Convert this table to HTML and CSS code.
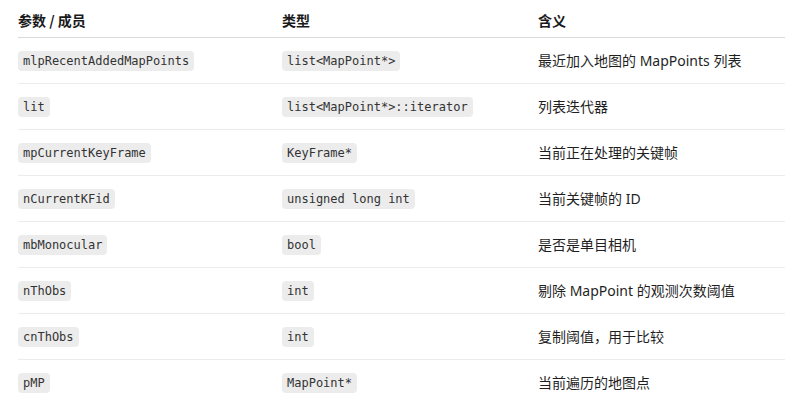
FILE: index.html
```html
<!DOCTYPE html>
<html>
<head>
<meta charset="utf-8">
<link rel="stylesheet" href="styles.css">
</head>
<body>
<table class="params">
  <colgroup>
    <col class="c1"><col class="c2"><col class="c3">
  </colgroup>
  <thead>
    <tr><th>参数 / 成员</th><th>类型</th><th>含义</th></tr>
  </thead>
  <tbody>
    <tr><td><code>mlpRecentAddedMapPoints</code></td><td><code>list&lt;MapPoint*&gt;</code></td><td>最近加入地图的 MapPoints 列表</td></tr>
    <tr><td><code>lit</code></td><td><code>list&lt;MapPoint*&gt;::iterator</code></td><td>列表迭代器</td></tr>
    <tr><td><code>mpCurrentKeyFrame</code></td><td><code>KeyFrame*</code></td><td>当前正在处理的关键帧</td></tr>
    <tr><td><code>nCurrentKFid</code></td><td><code>unsigned long int</code></td><td>当前关键帧的 ID</td></tr>
    <tr><td><code>mbMonocular</code></td><td><code>bool</code></td><td>是否是单目相机</td></tr>
    <tr><td><code>nThObs</code></td><td><code>int</code></td><td>剔除 MapPoint 的观测次数阈值</td></tr>
    <tr><td><code>cnThObs</code></td><td><code>int</code></td><td>复制阈值，用于比较</td></tr>
    <tr class="last"><td><code>pMP</code></td><td><code>MapPoint*</code></td><td>当前遍历的地图点</td></tr>
  </tbody>
</table>
</body>
</html>
```
FILE: styles.css
```css
html, body {
  margin: 0;
  padding: 0;
  background: #ffffff;
}
body {
  font-family: "Open Sans", "Noto Sans CJK SC", sans-serif;
  color: #1f1f1f;
}
.params {
  margin-left: 18px;
  width: 767px;
  border-collapse: collapse;
  table-layout: fixed;
}
.c1 { width: 264px; }
.c2 { width: 256px; }
.c3 { width: 247px; }
th {
  text-align: left;
  font-family: "Noto Sans CJK SC", sans-serif;
  font-weight: 700;
  font-size: 14px;
  line-height: 20px;
  padding: 10px 0 7px 0;
  border-bottom: 1px solid #d9d9d9;
  color: #1a1a1a;
}
td {
  font-size: 14px;
  line-height: 20px;
  height: 45px;
  padding: 0;
  vertical-align: middle;
  border-bottom: 1px solid #ececec;
  font-family: "Noto Sans", "Noto Sans CJK SC", sans-serif;
}
tr.last td {
  border-bottom: none;
}
code {
  font-family: "DejaVu Sans Mono", monospace;
  font-size: 12px;
  background: #ececec;
  color: #333333;
  border-radius: 4px;
  padding: 3px 5px;
}
```
